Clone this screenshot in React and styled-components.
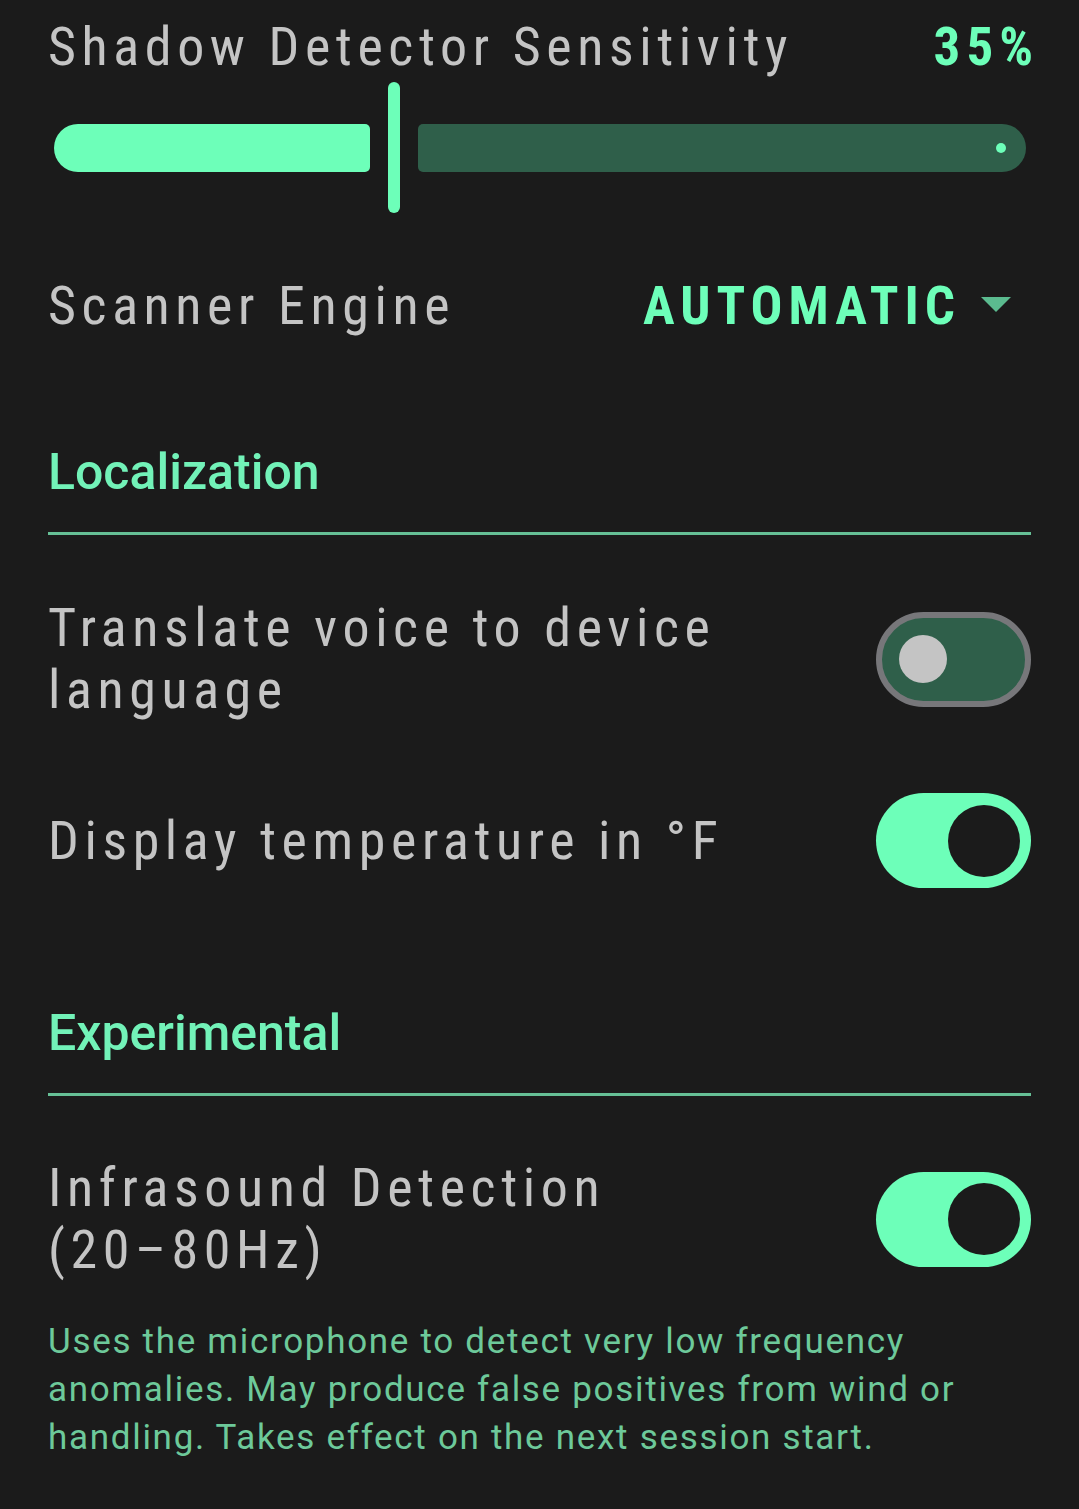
import styled, { createGlobalStyle } from "styled-components";

const GlobalStyle = createGlobalStyle`
  html, body {
    margin: 0;
    padding: 0;
    background: #1b1b1b;
  }
  body {
    font-family: Roboto, "Noto Sans", sans-serif;
  }
`;

const Page = styled.div`
  box-sizing: border-box;
  min-height: 1509px;
  padding: 16px 48px 40px;
  background: #1b1b1b;
`;

const Row = styled.div`
  display: flex;
  align-items: ${({ $align }) => $align || "center"};
  justify-content: space-between;
  gap: 24px;
`;

const Label = styled.div`
  font-size: 54px;
  line-height: 62px;
  font-stretch: 80%;
  letter-spacing: 5.6px;
  color: #c4c4c4;
  max-width: 780px;
`;

const NoWrap = styled.span`
  white-space: nowrap;
`;

const Value = styled.div`
  font-size: 53px;
  line-height: 62px;
  font-weight: 700;
  font-stretch: 80%;
  letter-spacing: 6px;
  color: #6dffb9;
  margin-right: ${({ $flush }) => ($flush ? "-8px" : "0")};
`;

const Dropdown = styled.div`
  display: flex;
  align-items: center;
  gap: 20px;
  padding-right: 20px;
`;

const Caret = styled.span`
  width: 0;
  height: 0;
  border-left: 15px solid transparent;
  border-right: 15px solid transparent;
  border-top: 15px solid #5bbb8f;
  margin-top: -4px;
`;

const Slider = styled.div`
  display: flex;
  align-items: center;
  gap: 18px;
  height: 131px;
  margin: 4px 5px 0 6px;
`;

const ActiveTrack = styled.div`
  height: 48px;
  flex: none;
  background: #6dffb9;
  border-radius: 24px 5px 5px 24px;
`;

const Handle = styled.div`
  width: 12px;
  height: 131px;
  flex: none;
  border-radius: 6px;
  background: #6dffb9;
`;

const InactiveTrack = styled.div`
  flex: 1;
  height: 48px;
  display: flex;
  align-items: center;
  justify-content: flex-end;
  padding-right: 20px;
  box-sizing: border-box;
  background: #2f5f4a;
  border-radius: 5px 24px 24px 5px;
`;

const StopDot = styled.span`
  width: 10px;
  height: 10px;
  border-radius: 50%;
  background: #6dffb9;
`;

const Section = styled.div`
  padding-top: ${({ $top }) => $top}px;
`;

const SectionTitle = styled.h2`
  margin: 0;
  font-size: 50px;
  line-height: 60px;
  font-weight: 500;
  color: #72f2b8;
  padding-bottom: 30px;
  border-bottom: 3px solid #66c096;
`;

const Item = styled.div`
  padding-top: ${({ $top }) => $top}px;
`;

const Switch = styled.div`
  box-sizing: border-box;
  width: 155px;
  height: 95px;
  flex: none;
  display: flex;
  align-items: center;
  border-radius: 48px;
  justify-content: ${({ $on }) => ($on ? "flex-end" : "flex-start")};
  padding: ${({ $on }) => ($on ? "0 11px 0 0" : "0 0 0 17px")};
  border: ${({ $on }) => ($on ? "none" : "6px solid #77777a")};
  background: ${({ $on }) => ($on ? "#6dffb9" : "#2f5f4a")};
`;

const Knob = styled.span`
  width: ${({ $on }) => ($on ? 72 : 48)}px;
  height: ${({ $on }) => ($on ? 72 : 48)}px;
  border-radius: 50%;
  background: ${({ $on }) => ($on ? "#1b1b1b" : "#c4c4c4")};
`;

const Note = styled.p`
  margin: 0;
  padding-top: 37px;
  font-size: 35px;
  line-height: 48px;
  letter-spacing: 1.7px;
  color: #6dc99a;
  max-width: 950px;
`;

function Toggle({ on }) {
  return (
    <Switch $on={on}>
      <Knob $on={on} />
    </Switch>
  );
}

export default function App() {
  const sensitivity = 35;
  return (
    <>
      <GlobalStyle />
      <Page>
        <Row $align="baseline">
          <Label>Shadow Detector Sensitivity</Label>
          <Value $flush>{sensitivity}%</Value>
        </Row>
        <Slider>
          <ActiveTrack style={{ width: `${(sensitivity / 100) * 903}px` }} />
          <Handle />
          <InactiveTrack>
            <StopDot />
          </InactiveTrack>
        </Slider>

        <Item $top={62}>
          <Row>
            <Label>Scanner Engine</Label>
            <Dropdown>
              <Value>AUTOMATIC</Value>
              <Caret />
            </Dropdown>
          </Row>
        </Item>

        <Section $top={105}>
          <SectionTitle>Localization</SectionTitle>
          <Item $top={62}>
            <Row>
              <Label>Translate voice to device language</Label>
              <Toggle on={false} />
            </Row>
          </Item>
          <Item $top={72}>
            <Row>
              <Label>Display temperature in °F</Label>
              <Toggle on />
            </Row>
          </Item>
        </Section>

        <Section $top={115}>
          <SectionTitle>Experimental</SectionTitle>
          <Item $top={61}>
            <Row>
              <Label>
                Infrasound Detection <NoWrap>(20–80Hz)</NoWrap>
              </Label>
              <Toggle on />
            </Row>
          </Item>
          <Note>
            Uses the microphone to detect very low frequency anomalies. May
            produce false positives from wind or handling. Takes effect on the
            next session start.
          </Note>
        </Section>
      </Page>
    </>
  );
}
